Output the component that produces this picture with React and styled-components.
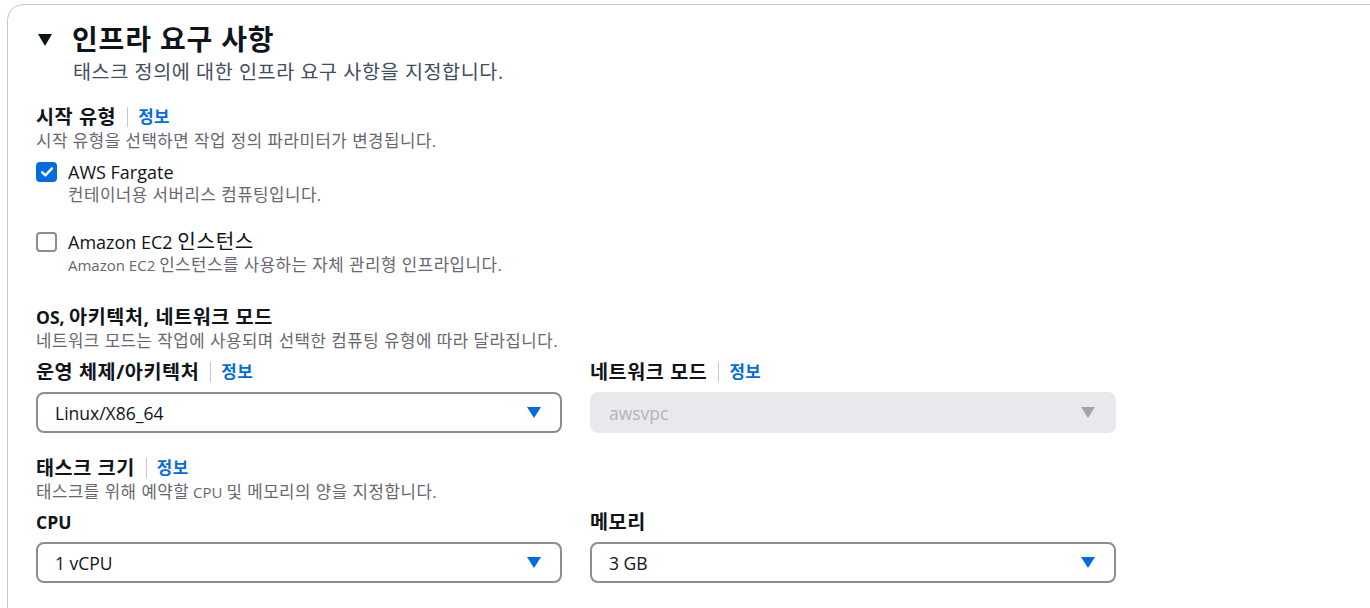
import React from 'react';
import styled, { createGlobalStyle } from 'styled-components';

const GlobalStyle = createGlobalStyle`
  html, body {
    margin: 0;
    padding: 0;
    background: #ffffff;
    overflow: hidden;
  }

  body {
    font-family: "Open Sans", "Noto Sans CJK KR", sans-serif;
    color: #0f141a;
  }
`

// Palette
const ink = '#0f141a';
const muted = '#656871';
const link = '#006ce0';
const line = '#c6c6cd';
const fieldBorder = '#8c8c94';

// Hangul runs are set a touch larger than the Latin text around them
const K = styled.span`
  font-size: 1.12em;
  letter-spacing: 0.03em;
  line-height: 1;
`

const Page = styled.div`
  padding: 4px 0 0 7px;
  height: 608px;
  box-sizing: border-box;
`

const Card = styled.section`
  margin-right: -40px;
  min-height: 700px;
  border: 1px solid ${line};
  border-radius: 16px;
  padding: 19px 28px 0 28px;
  box-sizing: border-box;
`

const Header = styled.header`
  display: flex;
  align-items: center;
  gap: 20px;
  padding-left: 2px;
`

const Caret = styled.span`
  width: 0;
  height: 0;
  border-left: 7.5px solid transparent;
  border-right: 7.5px solid transparent;
  border-top: 12px solid ${ink};
`

const Title = styled.h2`
  margin: 0;
  font-size: 25px;
  line-height: 32px;
  font-weight: 700;
  color: ${ink};
`

const HeaderDesc = styled.p`
  margin: 4px 0 0 37px;
  font-size: 17.5px;
  line-height: 24px;
  color: #414d5c;
`

const Section = styled.div`
  margin-top: ${p => p.$gap || 0}px;
`

const LabelRow = styled.div`
  display: flex;
  align-items: center;
  height: 24px;
`

const Label = styled.span`
  font-size: 17.5px;
  font-weight: 700;
  color: ${ink};
  line-height: 24px;
`

const Divider = styled.span`
  width: 1px;
  height: 20px;
  background: ${line};
  margin: 0 10px 0 11px;
`

const InfoLink = styled.a`
  font-size: 15px;
  font-weight: 700;
  color: ${link};
  text-decoration: none;
  line-height: 24px;
`

const Desc = styled.p`
  margin: 1px 0 0;
  font-size: 15px;
  line-height: 22px;
  color: ${muted};
`

const Option = styled.label`
  display: grid;
  grid-template-columns: 21px 1fr;
  column-gap: 11px;
  margin-top: ${p => p.$gap}px;
`

const Box = styled.span`
  width: 21px;
  height: 20px;
  margin-top: 2px;
  box-sizing: border-box;
  border-radius: 4px;
  border: 2px solid ${p => (p.$checked ? link : fieldBorder)};
  background: ${p => (p.$checked ? link : '#ffffff')};
  display: flex;
  align-items: center;
  justify-content: center;
`

const OptionText = styled.span`
  font-size: 18px;
  line-height: 24px;
  color: ${ink};
`

const OptionDesc = styled.span`
  grid-column: 2;
  font-size: 15px;
  line-height: 22px;
  color: ${muted};
`

const Columns = styled.div`
  display: grid;
  grid-template-columns: 526px 526px;
  column-gap: 28px;
  margin-top: ${p => p.$gap}px;
`

const Field = styled.div`
  display: flex;
  flex-direction: column;
`

const Select = styled.div`
  margin-top: 8px;
  height: 41px;
  box-sizing: border-box;
  border: 2px solid ${p => (p.$disabled ? '#e9e9ed' : fieldBorder)};
  background: ${p => (p.$disabled ? '#e9e9ed' : '#ffffff')};
  border-radius: 8px;
  display: flex;
  align-items: center;
  justify-content: space-between;
  padding: 0 19px 0 17px;
`

const Value = styled.span`
  font-size: 17.5px;
  color: ${p => (p.$disabled ? '#b4b4bb' : ink)};
`

const Arrow = styled.span`
  width: 0;
  height: 0;
  border-left: 7px solid transparent;
  border-right: 7px solid transparent;
  border-top: 11px solid ${p => (p.$disabled ? '#a3a3ab' : link)};
`

const Check = () => (
  <svg width="14" height="12" viewBox="0 0 14 12">
    <path d="M2 6.2 L5.4 9.4 L12 2.4" fill="none" stroke="#fff" strokeWidth="2.4" strokeLinecap="round" strokeLinejoin="round" />
  </svg>
)

const FieldLabel = ({ children, info }) => (
  <LabelRow>
    <Label>{children}</Label>
    {info && <><Divider /><InfoLink href="#"><K>정보</K></InfoLink></>}
  </LabelRow>
)

const SelectBox = ({ value, disabled }) => (
  <Select $disabled={disabled}>
    <Value $disabled={disabled}>{value}</Value>
    <Arrow $disabled={disabled} />
  </Select>
)

export default function App() {
  return (
    <Page>
      <GlobalStyle />
      <Card>
        <Header>
          <Caret />
          <Title><K>인프라 요구 사항</K></Title>
        </Header>
        <HeaderDesc><K>태스크 정의에 대한 인프라 요구 사항을 지정합니다.</K></HeaderDesc>

        <Section $gap={21}>
          <FieldLabel info><K>시작 유형</K></FieldLabel>
          <Desc><K>시작 유형을 선택하면 작업 정의 파라미터가 변경됩니다.</K></Desc>

          <Option $gap={8}>
            <Box $checked><Check /></Box>
            <OptionText>AWS Fargate</OptionText>
            <OptionDesc><K>컨테이너용 서버리스 컴퓨팅입니다.</K></OptionDesc>
          </Option>

          <Option $gap={24}>
            <Box />
            <OptionText>Amazon EC2 <K>인스턴스</K></OptionText>
            <OptionDesc>Amazon EC2 <K>인스턴스를 사용하는 자체 관리형 인프라입니다.</K></OptionDesc>
          </Option>
        </Section>

        <Section $gap={29}>
          <FieldLabel>OS, <K>아키텍처, 네트워크 모드</K></FieldLabel>
          <Desc><K>네트워크 모드는 작업에 사용되며 선택한 컴퓨팅 유형에 따라 달라집니다.</K></Desc>
          <Columns $gap={8}>
            <Field>
              <FieldLabel info><K>운영 체제/아키텍처</K></FieldLabel>
              <SelectBox value="Linux/X86_64" />
            </Field>
            <Field>
              <FieldLabel info><K>네트워크 모드</K></FieldLabel>
              <SelectBox value="awsvpc" disabled />
            </Field>
          </Columns>
        </Section>

        <Section $gap={23}>
          <FieldLabel info><K>태스크 크기</K></FieldLabel>
          <Desc><K>태스크를 위해 예약할</K> CPU <K>및 메모리의 양을 지정합니다.</K></Desc>
          <Columns $gap={7}>
            <Field>
              <FieldLabel>CPU</FieldLabel>
              <SelectBox value="1 vCPU" />
            </Field>
            <Field>
              <FieldLabel><K>메모리</K></FieldLabel>
              <SelectBox value="3 GB" />
            </Field>
          </Columns>
        </Section>
      </Card>
    </Page>
  );
}
